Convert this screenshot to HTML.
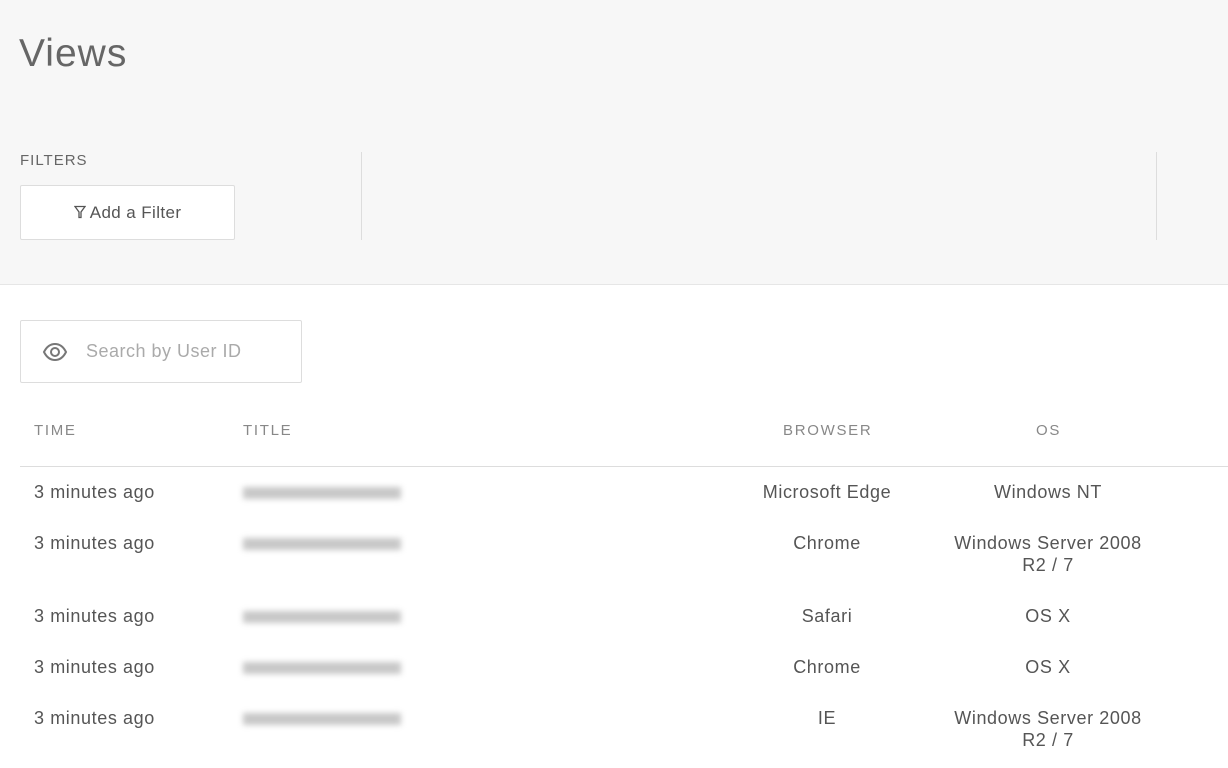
<!DOCTYPE html>
<html><head><style>
body{margin:0;width:1228px;height:768px;overflow:hidden;background:#fff;font-family:"Liberation Sans",sans-serif;color:#555;}
.hdr{position:absolute;left:0;top:0;width:1228px;height:284px;background:#f7f7f7;border-bottom:1px solid #e6e6e6;}
.t{position:absolute;left:19px;top:32px;font-size:39px;font-weight:300;color:#666;letter-spacing:1px;}
.f{position:absolute;left:20px;top:152px;font-size:15px;letter-spacing:1px;color:#666;}
.btn{position:absolute;left:20px;top:185px;width:215px;height:55px;background:#fff;border:1px solid #ddd;border-radius:2px;box-sizing:border-box;text-align:center;line-height:53px;font-size:17px;color:#555;letter-spacing:.4px;}
.vl{position:absolute;width:1px;background:#ddd;top:152px;height:88px;}
.search{position:absolute;left:20px;top:320px;width:282px;height:63px;border:1px solid #ddd;box-sizing:border-box;border-radius:2px;}
.search span{position:absolute;left:65px;top:20px;font-size:18px;color:#aaa;letter-spacing:.5px;}
.th{position:absolute;top:422px;font-size:15px;letter-spacing:1.7px;color:#888;}
.line{position:absolute;left:20px;top:466px;width:1208px;height:1px;background:#ddd;}
.c{position:absolute;font-size:18px;color:#555;line-height:22px;letter-spacing:.6px;}
.ctr{text-align:center;width:240px;}
.blur{position:absolute;left:243px;top:0;width:158px;height:12px;background:#c8c8c8;filter:blur(3px);}
</style></head><body>
<div class="hdr">
<div class="t">Views</div>
<div class="f">FILTERS</div>
<div class="btn"><svg width="12" height="14" viewBox="0 0 12 14" style="vertical-align:-1px"><path d="M1 1.5h10L7 7v5.5H5V7z" fill="none" stroke="#555" stroke-width="1.3"/></svg> Add a Filter</div>
<div class="vl" style="left:361px"></div>
<div class="vl" style="left:1156px"></div>
</div>
<div class="search"><svg style="position:absolute;left:21px;top:21px" width="26" height="20" viewBox="0 0 26 20"><path d="M2 10C5 4 9 2 13 2s8 2 11 8c-3 6-7 8-11 8S5 16 2 10z" fill="none" stroke="#777" stroke-width="2"/><circle cx="13" cy="10" r="4" fill="none" stroke="#777" stroke-width="2"/></svg><span>Search by User ID</span></div>
<div class="th" style="left:34px">TIME</div>
<div class="th" style="left:243px">TITLE</div>
<div class="th" style="left:783px">BROWSER</div>
<div class="th" style="left:1036px">OS</div>
<div class="line"></div>

<div class="c" style="left:34px;top:481px">3 minutes ago</div><div class="blur" style="top:487px"></div>
<div class="c ctr" style="left:707px;top:481px">Microsoft Edge</div><div class="c ctr" style="left:928px;top:481px">Windows NT</div>

<div class="c" style="left:34px;top:532px">3 minutes ago</div><div class="blur" style="top:538px"></div>
<div class="c ctr" style="left:707px;top:532px">Chrome</div><div class="c ctr" style="left:928px;top:532px">Windows Server 2008<br>R2 / 7</div>

<div class="c" style="left:34px;top:605px">3 minutes ago</div><div class="blur" style="top:611px"></div>
<div class="c ctr" style="left:707px;top:605px">Safari</div><div class="c ctr" style="left:928px;top:605px">OS X</div>

<div class="c" style="left:34px;top:656px">3 minutes ago</div><div class="blur" style="top:662px"></div>
<div class="c ctr" style="left:707px;top:656px">Chrome</div><div class="c ctr" style="left:928px;top:656px">OS X</div>

<div class="c" style="left:34px;top:707px">3 minutes ago</div><div class="blur" style="top:713px"></div>
<div class="c ctr" style="left:707px;top:707px">IE</div><div class="c ctr" style="left:928px;top:707px">Windows Server 2008<br>R2 / 7</div>
</body></html>
